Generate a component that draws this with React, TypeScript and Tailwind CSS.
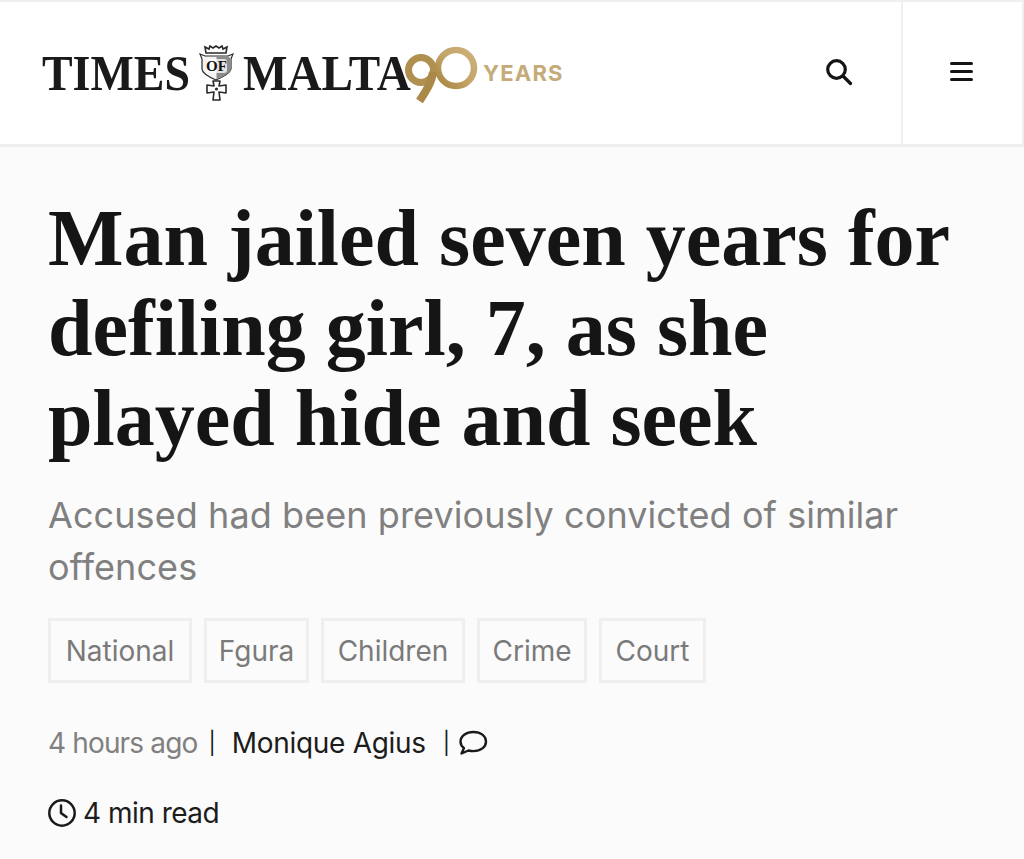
const tags = [
  { label: "National", width: "w-[144px]" },
  { label: "Fgura", width: "w-[105px]" },
  { label: "Children", width: "w-[144px]" },
  { label: "Crime", width: "w-[110px]" },
  { label: "Court", width: "w-[107px]" },
];

function Crest() {
  return (
    <svg width="35" height="56" viewBox="0 0 35 56" className="shrink-0">
      <path d="M7 8l-1-6 4 2 1-3 3 2 3-2 3 2 3-2 1 3 4-2-1 6z" fill="#fff" stroke="#2a2a2a" strokeWidth="1.6" />
      <path d="M1 9l5 2h23l5-2-2 5v10q-1 5-15 11Q3 29 3 24V14z" fill="#f4f4f4" stroke="#2a2a2a" strokeWidth="1.2" />
      <path d="M17.500 11H29l3 3v10q-1 5-14.500 10z" fill="#8c8c8c" />
      <rect x="7" y="14" width="21" height="14" rx="3" fill="#fff" fillOpacity="0.75" />
      <text x="17.500" y="26" textAnchor="middle" fontFamily="Liberation Serif" fontWeight="700" fontSize="15" fill="#111">OF</text>
      <path d="M14 36h7l-1 5 7-1v8l-7-1 1 8h-7l1-8-7 1v-8l7 1z" fill="#fff" stroke="#2a2a2a" strokeWidth="1.6" strokeLinejoin="round" />
      <circle cx="17.500" cy="44" r="1.600" fill="#2a2a2a" />
    </svg>
  );
}

function Ninety() {
  return (
    <svg width="74" height="60" viewBox="0 0 74 60" className="shrink-0">
      <defs>
        <linearGradient id="gold" x1="0" x2="1" y1="1" y2="0">
          <stop offset="0" stopColor="#a5853f" />
          <stop offset="0.5" stopColor="#c4a569" />
          <stop offset="1" stopColor="#cdb17c" />
        </linearGradient>
      </defs>
      <circle cx="51" cy="24" r="18" fill="none" stroke="url(#gold)" strokeWidth="6.500" />
      <circle cx="16" cy="26" r="12.500" fill="none" stroke="#b0904f" strokeWidth="7" />
      <path d="M28 28C27 38 21 47 14.500 57" fill="none" stroke="#a98848" strokeWidth="8" />
    </svg>
  );
}

function Logo() {
  return (
    <div className="flex items-center font-['Liberation_Serif',serif] text-[#1a1a1a]">
      <span className="inline-block w-[148px] origin-left scale-x-90 text-[51px] leading-none font-bold whitespace-nowrap">TIMES</span>
      <span className="mx-[9px]">
        <Crest />
      </span>
      <span className="inline-block w-[165px] origin-left scale-x-[0.925] text-[51px] leading-none font-bold whitespace-nowrap">MALTA</span>
      <span className="-ml-[3px] pt-[1px]">
        <Ninety />
      </span>
      <span className="ml-[4px] font-['Inter',sans-serif] text-[22px] leading-none font-bold tracking-[1.200px] text-[#c4ab78]">YEARS</span>
    </div>
  );
}

function SearchIcon() {
  return (
    <svg width="28" height="28" viewBox="0 0 28 28" fill="none" stroke="#141414" strokeWidth="3.200" strokeLinecap="round">
      <circle cx="11.500" cy="11.500" r="8.800" />
      <path d="M18 18l7.500 7.500" />
    </svg>
  );
}

function MenuIcon() {
  return (
    <div className="flex w-[23px] flex-col gap-[5px]">
      <div className="h-[3px] rounded-full bg-[#141414]" />
      <div className="h-[3px] rounded-full bg-[#141414]" />
      <div className="h-[3px] rounded-full bg-[#141414]" />
    </div>
  );
}

function CommentIcon() {
  return (
    <svg width="30" height="28" viewBox="0 0 30 28" fill="none" stroke="#1a1a1a" strokeWidth="2.400" strokeLinejoin="round">
      <path d="M15.500 3C8 3 2.500 7 2.500 12.500c0 2.800 1.400 5 3.500 6.600L3.500 24.500l7-3c1.600.4 3.200.6 5 .6 7.200 0 12.500-4 12.500-9.600S22.700 3 15.500 3z" />
    </svg>
  );
}

function ClockIcon() {
  return (
    <svg width="30" height="30" viewBox="0 0 30 30" fill="none" stroke="#1a1a1a" strokeWidth="2.500" strokeLinecap="round" className="-ml-px">
      <circle cx="15" cy="15" r="12.700" />
      <path d="M14 7.500V15l5.500 4" />
    </svg>
  );
}

export default function App() {
  return (
    <div className="h-[859px] w-[1024px] overflow-hidden bg-[#fbfbfb] font-['Inter',sans-serif]">
      <header className="flex h-[147px] border-t-2 border-r-2 border-b-[3px] border-[#efefef] bg-white">
        <div className="flex flex-1 items-center pl-[42px]">
          <Logo />
        </div>
        <div className="flex w-[123px] items-center justify-center pr-[1px] pb-[2px]">
          <SearchIcon />
        </div>
        <div className="flex w-[121px] items-center justify-center border-l-2 border-[#efefef] pr-[2px] pb-[4px]">
          <MenuIcon />
        </div>
      </header>

      <main className="px-[48px] pt-[46px]">
        <h1 className="font-['Liberation_Serif',serif] text-[80px] leading-[90px] font-bold text-[#151515]">
          Man jailed seven years for defiling girl, 7, as she played hide and seek
        </h1>
        <p className="mt-[26px] text-[36px] leading-[52px] tracking-[0.08px] text-[#808080]">
          Accused had been previously convicted of similar offences
        </p>

        <div className="mt-[25px] flex gap-[12px]">
          {tags.map((tag) => (
            <span
              key={tag.label}
              className={`flex h-[65px] items-center justify-center border-[3px] border-[#efefef] text-[28px] text-[#7a7a7a] ${tag.width}`}
            >
              {tag.label}
            </span>
          ))}
        </div>

        <div className="mt-[38px] flex items-center text-[28px] leading-[44px] text-[#1c1c1c]">
          <span className="tracking-[-0.85px] text-[#808080]">4 hours ago</span>
          <span className="ml-[11px] text-[22px]">|</span>
          <span className="ml-[16px] tracking-[-0.3px]">Monique Agius</span>
          <span className="ml-[17px] text-[22px]">|</span>
          <span className="ml-[8px]">
            <CommentIcon />
          </span>
        </div>

        <div className="mt-[26px] flex items-center gap-[6px] text-[28px] leading-[44px] text-[#1c1c1c]">
          <ClockIcon />
          <span className="tracking-[-0.5px]">4 min read</span>
        </div>
      </main>
    </div>
  );
}
